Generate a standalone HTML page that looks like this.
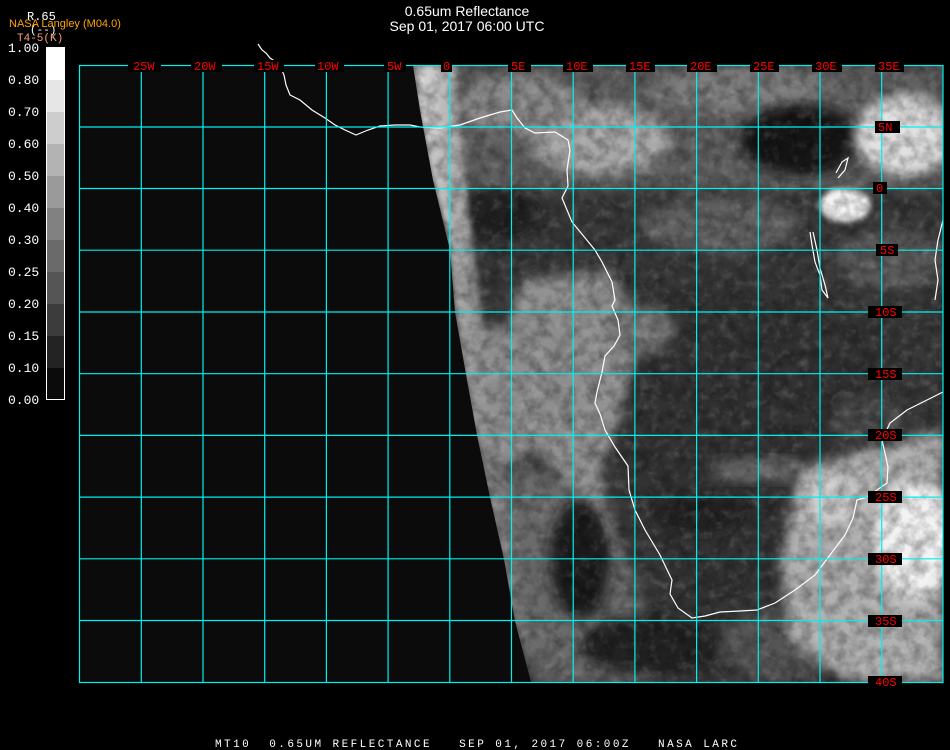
<!DOCTYPE html>
<html><head><meta charset="utf-8"><style>
html,body{margin:0;padding:0;background:#000;width:950px;height:750px;overflow:hidden}
svg{display:block}
text{font-family:"Liberation Mono","DejaVu Sans Mono",monospace}
text.s{font-family:"Liberation Sans",sans-serif}
</style></head><body>
<svg width="950" height="750" viewBox="0 0 950 750" xmlns="http://www.w3.org/2000/svg">
<defs>
<clipPath id="sat"><polygon points="413,65 943,65 943,682 531,682 515,621 504,559 490,497 477,435 466,374 455,312 450,250 433,180 420,110"/></clipPath>
<filter id="b6" x="-20%" y="-20%" width="140%" height="140%"><feGaussianBlur stdDeviation="6"/></filter>
<filter id="b3" x="-20%" y="-20%" width="140%" height="140%"><feGaussianBlur stdDeviation="3"/></filter>
<filter id="noise" x="0" y="0" width="100%" height="100%">
<feTurbulence type="fractalNoise" baseFrequency="0.08" numOctaves="3" seed="7"/>
<feColorMatrix type="matrix" values="0 0 0 0 0  0 0 0 0 0  0 0 0 0 0  1.6 0 0 0 -0.55"/>
</filter>
<filter id="noiseW" x="0" y="0" width="100%" height="100%">
<feTurbulence type="fractalNoise" baseFrequency="0.1" numOctaves="3" seed="11"/>
<feColorMatrix type="matrix" values="0 0 0 0 1  0 0 0 0 1  0 0 0 0 1  2.2 0 0 0 -1.1"/>
</filter>
<linearGradient id="edge" x1="0" x2="1" y1="0" y2="0"><stop offset="0" stop-color="#e0e0e0"/><stop offset="0.4" stop-color="#a0a0a0"/><stop offset="1" stop-color="#808080" stop-opacity="0"/></linearGradient>
</defs>

<rect x="79" y="65" width="864" height="617" fill="#0b0b0b"/>

<g clip-path="url(#sat)">
<rect x="400" y="65" width="543" height="617" fill="#383838"/>
<!-- north cloudy band -->
<rect x="400" y="65" width="543" height="125" fill="#5e5e5e" filter="url(#b6)"/>
<ellipse cx="600" cy="140" rx="70" ry="35" fill="#a8a8a8" filter="url(#b6)"/>
<ellipse cx="520" cy="105" rx="60" ry="30" fill="#8a8a8a" filter="url(#b6)"/>
<ellipse cx="740" cy="90" rx="90" ry="22" fill="#7e7e7e" filter="url(#b6)"/>
<ellipse cx="800" cy="140" rx="60" ry="35" fill="#161616" filter="url(#b6)"/>
<ellipse cx="905" cy="135" rx="50" ry="40" fill="#e0e0e0" filter="url(#b6)"/>
<ellipse cx="845" cy="205" rx="26" ry="17" fill="#f4f4f4" filter="url(#b3)"/>
<ellipse cx="720" cy="225" rx="80" ry="28" fill="#606060" filter="url(#b6)"/>
<ellipse cx="890" cy="260" rx="55" ry="30" fill="#5a5a5a" filter="url(#b6)"/>
<ellipse cx="500" cy="215" rx="40" ry="25" fill="#222" filter="url(#b6)"/>
<!-- interior darker land -->
<polygon points="615,300 760,290 880,330 880,470 820,560 760,600 690,610 660,540 630,470 610,400" fill="#303030" filter="url(#b6)"/>
<ellipse cx="760" cy="470" rx="50" ry="12" fill="#6e6e6e" filter="url(#b6)"/>
<ellipse cx="700" cy="515" rx="45" ry="18" fill="#222" filter="url(#b6)"/>
<!-- stratocumulus deck -->
<polygon points="520,280 610,270 640,330 620,420 600,470 620,560 650,600 600,560 560,480 520,420 500,360" fill="#929292" filter="url(#b6)"/>
<ellipse cx="640" cy="330" rx="35" ry="25" fill="#777" filter="url(#b6)"/>
<polygon points="460,330 560,320 600,380 560,440 500,470 470,420" fill="#8e8e8e" filter="url(#b6)"/>
<!-- ocean streaks south -->
<polygon points="480,470 560,470 600,520 640,600 660,682 540,682 500,600" fill="#6a6a6a" filter="url(#b6)"/>
<ellipse cx="580" cy="560" rx="30" ry="60" fill="#1c1c1c" filter="url(#b6)"/>
<ellipse cx="650" cy="645" rx="70" ry="30" fill="#222" filter="url(#b6)"/>
<ellipse cx="780" cy="645" rx="60" ry="35" fill="#555" filter="url(#b6)"/>
<!-- SE cloud mass -->
<polygon points="800,470 860,450 943,430 943,682 850,682 790,640 780,560" fill="#b0b0b0" filter="url(#b6)"/>
<ellipse cx="915" cy="540" rx="40" ry="60" fill="#f2f2f2" filter="url(#b6)"/>
<ellipse cx="830" cy="500" rx="30" ry="25" fill="#cdcdcd" filter="url(#b6)"/>
<ellipse cx="870" cy="420" rx="40" ry="25" fill="#4a4a4a" filter="url(#b6)"/>
<!-- bright limb edge -->
<polygon points="413,65 455,65 465,180 480,300 495,420 510,520 545,682 531,682 515,621 504,559 490,497 477,435 466,374 455,312 450,250 433,180 420,110" fill="url(#edge)" filter="url(#b3)"/>
<!-- texture -->
<rect x="400" y="65" width="543" height="617" filter="url(#noise)" opacity="0.4"/>
<rect x="400" y="65" width="543" height="617" filter="url(#noiseW)" opacity="0.15"/>
</g>

<g fill="none" stroke="#fff" stroke-width="1.2">
<polyline points="258,44 262,50 266,53 270,58 276,62 280,66 284,75 286,85 290,95 300,100 312,110 325,118 335,125 345,130 356,135 368,130 380,126 395,125 410,125 420,127 440,128 460,125 480,118 500,112 512,110 517,118 525,128 535,133 555,132 568,140 570,150 567,170 568,186 562,198 572,222 595,250 602,262 612,282 615,300 612,306 618,320 620,335 614,346 605,356 602,372 597,392 595,403 600,414 605,430 615,447 628,466 629,490 635,510 645,530 660,555 672,580 670,594 678,608 692,618 705,616 720,612 740,611 757,610 775,603 795,590 815,575 830,555 845,535 853,518 857,500 867,497 887,483 888,467 882,440 890,423 907,410 927,400 943,392"/>
<polyline points="810,232 812,245 815,262 820,275 822,290 828,298 825,285 820,268 817,250 813,232"/>
<polyline points="836,173 842,162 848,158 845,170 838,178"/>
<polyline points="943,220 938,240 935,260 938,280 935,300"/>
</g>

<g stroke="#00f0f0" stroke-width="1.2" fill="none">
<rect x="79.5" y="65.5" width="863.5" height="617"/>
<path d="M141.3 65V682M203 65V682M264.7 65V682M326.4 65V682M388.1 65V682M449.8 65V682M511.5 65V682M573.2 65V682M634.9 65V682M696.6 65V682M758.3 65V682M820 65V682M881.7 65V682"/>
<path d="M79 127H943M79 188.5H943M79 250.2H943M79 312H943M79 373.7H943M79 435.4H943M79 497.1H943M79 558.8H943M79 620.5H943"/>
</g>

<g fill="#000">
<rect x="128" y="60" width="33" height="12"/><rect x="191" y="60" width="31" height="12"/><rect x="254" y="60" width="30" height="12"/><rect x="315" y="60" width="29" height="12"/><rect x="384" y="60" width="22" height="12"/><rect x="441" y="60" width="11" height="12"/><rect x="508" y="60" width="23" height="12"/><rect x="563" y="60" width="30" height="12"/><rect x="626" y="60" width="29" height="12"/><rect x="687" y="60" width="30" height="12"/><rect x="750" y="60" width="29" height="12"/><rect x="812" y="60" width="30" height="12"/><rect x="875" y="60" width="29" height="12"/>
<rect x="875" y="121" width="25" height="12"/><rect x="873" y="182" width="14" height="12"/><rect x="876" y="244" width="22" height="12"/><rect x="868" y="306" width="34" height="12"/><rect x="868" y="368" width="34" height="12"/><rect x="868" y="429" width="34" height="12"/><rect x="868" y="491" width="34" height="12"/><rect x="868" y="553" width="34" height="12"/><rect x="868" y="615" width="34" height="12"/><rect x="868" y="676" width="34" height="12"/>
</g>
<g fill="#ff0000" font-size="12">
<text x="133" y="70">25W</text><text x="194" y="70">20W</text><text x="257" y="70">15W</text><text x="317" y="70">10W</text><text x="387" y="70">5W</text><text x="443" y="70">0</text><text x="511" y="70">5E</text><text x="566" y="70">10E</text><text x="629" y="70">15E</text><text x="690" y="70">20E</text><text x="753" y="70">25E</text><text x="815" y="70">30E</text><text x="878" y="70">35E</text>
<text x="878" y="131">5N</text><text x="876" y="192">0</text><text x="880" y="254">5S</text><text x="875" y="316">10S</text><text x="875" y="378">15S</text><text x="875" y="439">20S</text><text x="875" y="501">25S</text><text x="875" y="563">30S</text><text x="875" y="625">35S</text><text x="875" y="686">40S</text>
</g>

<g>
<rect x="46" y="47" width="18" height="33" fill="#fff"/>
<rect x="46" y="80" width="18" height="32" fill="#e6e6e6"/>
<rect x="46" y="112" width="18" height="32" fill="#cdcdcd"/>
<rect x="46" y="144" width="18" height="32" fill="#b3b3b3"/>
<rect x="46" y="176" width="18" height="32" fill="#9a9a9a"/>
<rect x="46" y="208" width="18" height="32" fill="#818181"/>
<rect x="46" y="240" width="18" height="32" fill="#6a6a6a"/>
<rect x="46" y="272" width="18" height="32" fill="#555"/>
<rect x="46" y="304" width="18" height="32" fill="#3c3c3c"/>
<rect x="46" y="336" width="18" height="32" fill="#232323"/>
<rect x="46" y="368" width="18" height="32" fill="#0b0b0b"/>
<rect x="46.5" y="47.5" width="18" height="352" fill="none" stroke="#fff" stroke-width="1"/>
</g>
<g fill="#fff" font-size="13">
<text x="8" y="52">1.00</text><text x="8" y="84">0.80</text><text x="8" y="116">0.70</text><text x="8" y="148">0.60</text><text x="8" y="180">0.50</text><text x="8" y="212">0.40</text><text x="8" y="244">0.30</text><text x="8" y="276">0.25</text><text x="8" y="308">0.20</text><text x="8" y="340">0.15</text><text x="8" y="372">0.10</text><text x="8" y="404">0.00</text>
</g>
<text x="27" y="20" fill="#fff" font-size="12">R.65</text>
<text x="30" y="33" fill="#fff" font-size="11">(--)</text>
<text class="s" x="9" y="27" fill="#ffa500" font-size="11">NASA Langley (M04.0)</text>
<text x="17" y="41" fill="#f4a070" font-size="11">T4-5(K)</text>

<g fill="#fff" font-size="14" text-anchor="middle">
<text class="s" x="467" y="16">0.65um Reflectance</text>
<text class="s" x="467" y="31">Sep 01, 2017 06:00 UTC</text>
</g>

<text x="215" y="747" fill="#fff" font-size="11" xml:space="preserve" style="white-space:pre" textLength="522" lengthAdjust="spacing">MT10  0.65UM REFLECTANCE   SEP 01, 2017 06:00Z   NASA LARC</text>
</svg>
</body></html>
